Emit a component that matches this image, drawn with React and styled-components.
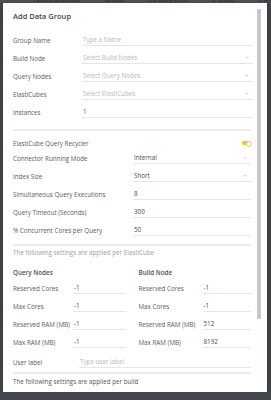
import React from 'react'
import styled, { createGlobalStyle } from 'styled-components'

const GlobalStyle = createGlobalStyle`
  html, body {
    margin: 0;
    background: #43464a;
    font-family: "Open Sans", "DejaVu Sans", sans-serif;
  }
`

const topFields = [
  { label: 'Group Name', placeholder: 'Type a Name' },
  { label: 'Build Node', placeholder: 'Select Build Nodes', select: true },
  { label: 'Query Nodes', placeholder: 'Select Query Nodes', select: true },
  { label: 'ElastiCubes', placeholder: 'Select ElastiCubes', select: true },
  { label: 'Instances', value: '1' },
]

const cubeFields = [
  { label: 'Connector Running Mode', value: 'Internal', select: true },
  { label: 'Index Size', value: 'Short', select: true },
  { label: 'Simultaneous Query Executions', value: '8' },
  { label: 'Query Timeout (Seconds)', value: '300' },
  { label: '% Concurrent Cores per Query', value: '50' },
]

const queryNodes = [
  ['Reserved Cores', '-1'],
  ['Max Cores', '-1'],
  ['Reserved RAM (MB)', '-1'],
  ['Max RAM (MB)', '-1'],
]

const buildNode = [
  ['Reserved Cores', '-1'],
  ['Max Cores', '-1'],
  ['Reserved RAM (MB)', '512'],
  ['Max RAM (MB)', '8192'],
]

function Chevron() {
  return (
    <ChevronIcon viewBox="0 0 8 5" aria-hidden="true">
      <path d="M1 1l3 3 3-3" fill="none" stroke="#9a9a9a" strokeWidth="1" />
    </ChevronIcon>
  )
}

function Field({ label, value, placeholder, select, labelWidth }) {
  return (
    <Row $labelWidth={labelWidth}>
      <Label>{label}</Label>
      <Input>
        {value ? <Value>{value}</Value> : <Placeholder>{placeholder}</Placeholder>}
        {select && <Chevron />}
      </Input>
    </Row>
  )
}

export default function App() {
  return (
    <>
      <GlobalStyle />
      <Nav>
        <NavItem>Notebooks</NavItem>
        <NavItem>Data</NavItem>
        <NavItem>Analytics</NavItem>
        <NavItem>Pulse</NavItem>
        <NavItem>Admin</NavItem>
      </Nav>
      <Modal>
        <Title>Add Data Group</Title>

        <TopGroup>
          {topFields.map(f => <Field key={f.label} {...f} labelWidth={69} />)}
        </TopGroup>

        <Divider $top={8} />

        <ToggleRow>
          <Label>ElastiCube Query Recycler</Label>
          <Toggle />
        </ToggleRow>

        {cubeFields.map(f => <Field key={f.label} {...f} labelWidth={120} />)}

        <Divider $top={5} />
        <Note>The following settings are applied per ElastiCube</Note>

        <Columns>
          <div>
            <Heading>Query Nodes</Heading>
            {queryNodes.map(([l, v]) => <Field key={l} label={l} value={v} labelWidth={60} />)}
          </div>
          <div>
            <Heading>Build Node</Heading>
            {buildNode.map(([l, v]) => <Field key={l} label={l} value={v} labelWidth={64} />)}
          </div>
        </Columns>

        <UserRow>
          <Field label="User label" placeholder="Type user label" labelWidth={66} />
        </UserRow>

        <Divider $top={1} />
        <Note $dark>The following settings are applied per build</Note>

        <Scrollbar />
      </Modal>
    </>
  )
}

const Nav = styled.div`
  height: 3px;
  overflow: hidden;
  background: #4d5054;
  display: flex;
  gap: 24px;
  padding-left: 33px;
`

const NavItem = styled.span`
  font-size: 9px;
  line-height: 9px;
  margin-top: -6px;
  color: #34373a;
  font-weight: 600;
`

const Modal = styled.div`
  position: relative;
  margin: 0 4px 0 3px;
  height: 389px;
  overflow: hidden;
  background: #fff;
  padding: 0 16px 0 10px;
  box-sizing: border-box;
  box-shadow: 0 1px 3px rgba(0, 0, 0, 0.35);
`

const Title = styled.div`
  height: 26px;
  line-height: 26px;
  font-size: 7.5px;
  font-weight: 600;
  color: #444;
  margin-bottom: 2px;
`

const TopGroup = styled.div`
  margin-right: -2px;
`

const Row = styled.div`
  display: grid;
  grid-template-columns: ${p => p.$labelWidth}px 1fr;
  height: 18px;
  align-items: center;
`

const Label = styled.div`
  font-size: 6.25px;
  line-height: 11px;
  color: #5a5a5a;
  white-space: nowrap;
`

const Input = styled.div`
  position: relative;
  height: 11px;
  border-bottom: 1px solid #e6e6ea;
  display: flex;
  align-items: center;
  justify-content: space-between;
  padding-left: 1px;
`

const Value = styled.span`
  font-size: 6.25px;
  color: #4a4a4a;
`

const Placeholder = styled.span`
  font-size: 6.25px;
  color: #b8b8bc;
`

const ChevronIcon = styled.svg`
  width: 4px;
  height: 3px;
  margin-right: 4px;
`

const Divider = styled.div`
  margin-top: ${p => p.$top}px;
  height: 2px;
  background: #ececef;
`

const ToggleRow = styled.div`
  margin-top: 6px;
  height: 12px;
  display: flex;
  align-items: center;
  justify-content: space-between;
`

const Toggle = styled.div`
  position: relative;
  width: 9px;
  height: 4px;
  border-radius: 2px;
  background: #ffc400;

  &::after {
    content: '';
    position: absolute;
    right: -1px;
    top: -0.5px;
    width: 4px;
    height: 4px;
    border-radius: 50%;
    background: #fff;
    border: 0.5px solid #c8c8c8;
  }
`

const Note = styled.div`
  margin-top: ${p => (p.$dark ? 2 : 1)}px;
  font-size: 6.25px;
  line-height: 12px;
  color: ${p => (p.$dark ? '#555' : '#a0a0a4')};
`

const Columns = styled.div`
  display: grid;
  grid-template-columns: 1fr 1fr;
  column-gap: 13px;
  margin-top: 8px;
`

const Heading = styled.div`
  font-size: 6.3px;
  line-height: 12px;
  font-weight: 600;
  color: #505050;
`

const UserRow = styled.div`
  margin-top: 2px;
`

const Scrollbar = styled.div`
  position: absolute;
  left: 254px;
  top: 6px;
  width: 4px;
  height: 310px;
  border-radius: 1px;
  background: #c8c8c8;
`
